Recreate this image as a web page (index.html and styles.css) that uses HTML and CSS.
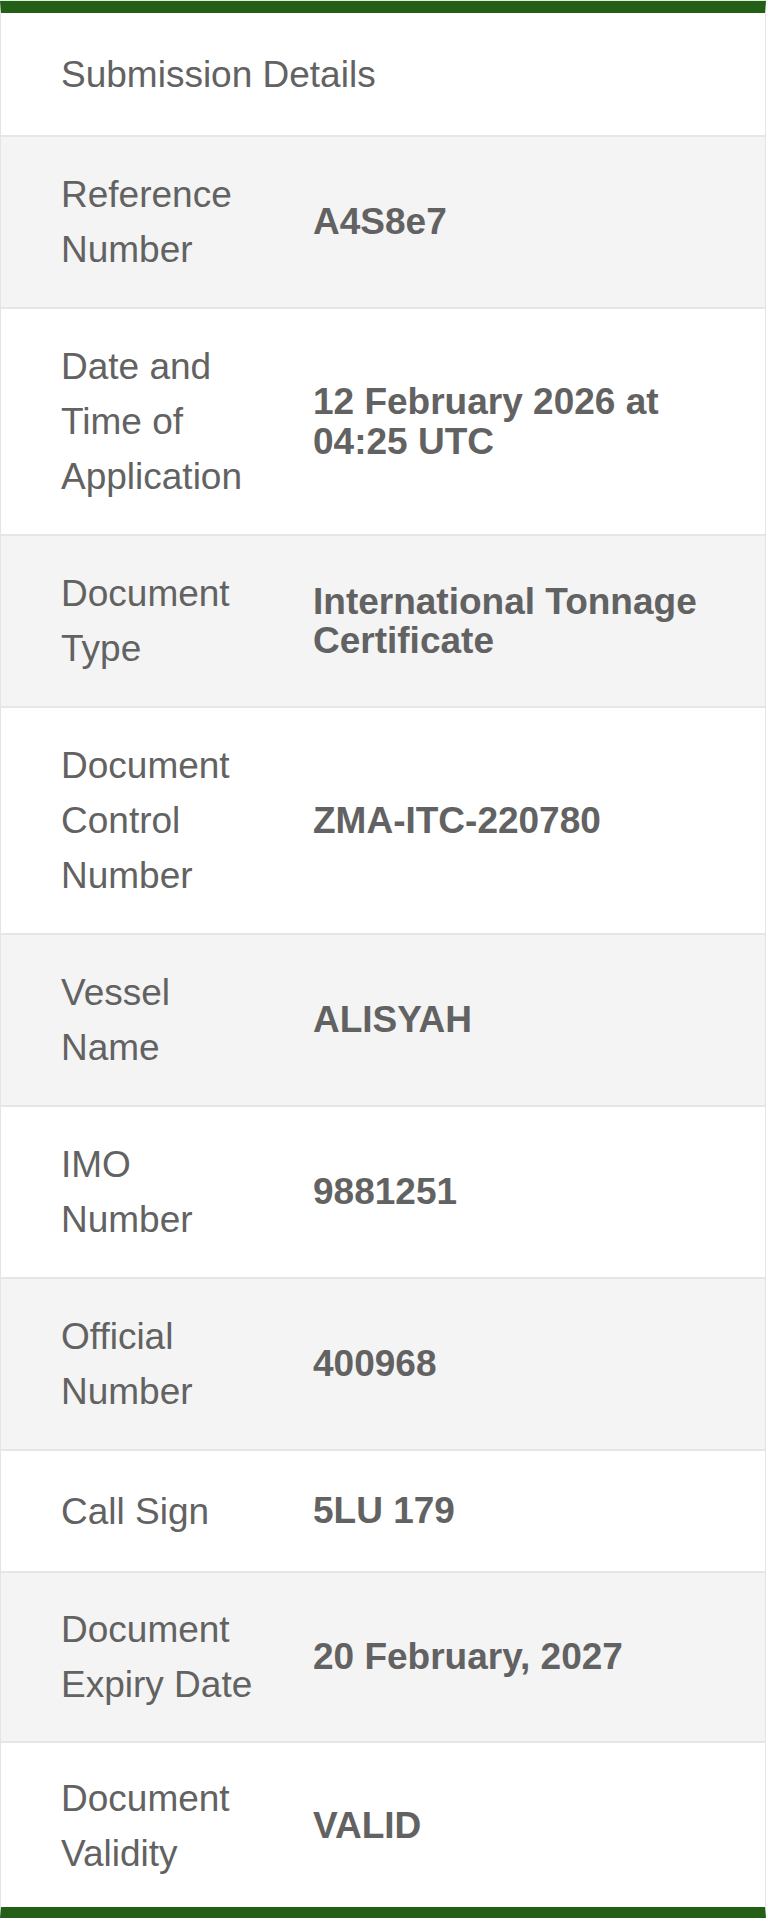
FILE: index.html
```html
<!DOCTYPE html>
<html lang="en">
<head>
<meta charset="utf-8">
<title>Submission Details</title>
<link rel="stylesheet" href="styles.css">
</head>
<body>
<div class="card">
  <div class="row head"><div class="label">Submission Details</div></div>
  <div class="row"><div class="label">Reference Number</div><div class="value">A4S8e7</div></div>
  <div class="row"><div class="label">Date and Time of Application</div><div class="value">12 February 2026 at 04:25 UTC</div></div>
  <div class="row"><div class="label">Document Type</div><div class="value">International Tonnage Certificate</div></div>
  <div class="row"><div class="label">Document Control Number</div><div class="value">ZMA-ITC-220780</div></div>
  <div class="row"><div class="label">Vessel Name</div><div class="value">ALISYAH</div></div>
  <div class="row"><div class="label">IMO Number</div><div class="value">9881251</div></div>
  <div class="row"><div class="label">Official Number</div><div class="value">400968</div></div>
  <div class="row"><div class="label">Call Sign</div><div class="value">5LU 179</div></div>
  <div class="row expiry"><div class="label">Document Expiry Date</div><div class="value">20 February, 2027</div></div>
  <div class="row last"><div class="label">Document Validity</div><div class="value">VALID</div></div>
</div>
</body>
</html>
```

FILE: styles.css
```css
html, body {
  margin: 0;
  padding: 0;
  background: #ffffff;
}

body {
  padding-top: 1px;
  font-family: "Liberation Sans", Arial, sans-serif;
  color: #626262;
}

.card {
  width: 764px;
  border-left: 1px solid #e4e4e4;
  border-right: 1px solid #e4e4e4;
  border-top: 12px solid #245f18;
  border-bottom: 11px solid #245f18;
  box-shadow: 0 1px 0 #dfeedd, 0 -1px 0 #dfeedd;
}

.row {
  display: grid;
  grid-template-columns: 200px 1fr;
  column-gap: 52px;
  align-items: center;
  min-height: 60px;
  padding: 30px 30px 30px 60px;
  border-bottom: 2px solid #e6e6e6;
  background: #ffffff;
}

.row:nth-child(even) {
  background: #f4f4f4;
}

.row.head {
  display: flex;
  padding-top: 31px;
  padding-bottom: 31px;
}

.row.expiry {
  padding-top: 29px;
  padding-bottom: 29px;
}

.row.last {
  border-bottom: 0;
  padding-top: 28px;
  padding-bottom: 26px;
}

.label {
  font-size: 37px;
  line-height: 55px;
  font-weight: 400;
}

.head .label {
  white-space: nowrap;
}

.value {
  font-size: 37px;
  line-height: 39.5px;
  font-weight: 700;
}
```
